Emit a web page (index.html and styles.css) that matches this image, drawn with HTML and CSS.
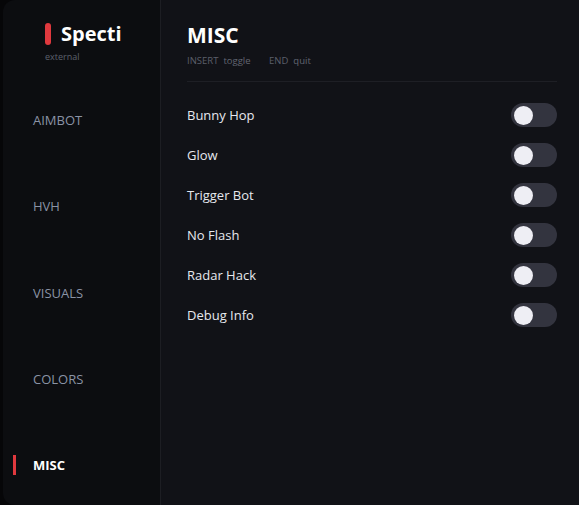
FILE: index.html
```html
<!DOCTYPE html>
<html lang="en">
<head>
  <meta charset="UTF-8">
  <title>Specti</title>
  <meta name="viewport" content="width=device-width, initial-scale=1">
  <link rel="stylesheet" href="styles.css">
</head>
<body>
  <div class="app">

    <!-- Sidebar -->
    <aside class="sidebar">
      <div class="brand">
        <div class="brand-row">
          <span class="brand-mark"></span>
          <span class="brand-name">Specti</span>
        </div>
        <div class="brand-sub">external</div>
      </div>
      <nav class="nav">
        <div class="nav-item">AIMBOT</div>
        <div class="nav-item">HVH</div>
        <div class="nav-item">VISUALS</div>
        <div class="nav-item">COLORS</div>
        <div class="nav-item active">MISC</div>
      </nav>
    </aside>

    <!-- Page -->
    <main class="page">
      <h1>MISC</h1>
      <div class="hints">
        <span class="key">INSERT</span><span class="act">toggle</span>
        <span class="key">END</span><span class="act">quit</span>
      </div>
      <div class="divider"></div>

      <div class="options">
        <div class="option"><span>Bunny Hop</span><span class="switch"><span class="knob"></span></span></div>
        <div class="option"><span>Glow</span><span class="switch"><span class="knob"></span></span></div>
        <div class="option"><span>Trigger Bot</span><span class="switch"><span class="knob"></span></span></div>
        <div class="option"><span>No Flash</span><span class="switch"><span class="knob"></span></span></div>
        <div class="option"><span>Radar Hack</span><span class="switch"><span class="knob"></span></span></div>
        <div class="option"><span>Debug Info</span><span class="switch"><span class="knob"></span></span></div>
      </div>
    </main>

  </div>
</body>
</html>
```

FILE: styles.css
```css
* {
  box-sizing: border-box;
}

html, body {
  margin: 0;
  padding: 0;
  height: 100%;
  background: #060608;
  font-family: 'Open Sans', 'Noto Sans', sans-serif;
  overflow: hidden;
}

.app {
  display: flex;
  height: 100vh;
  margin-left: 3px;
}

/* sidebar */
.sidebar {
  width: 158px;
  flex-shrink: 0;
  display: flex;
  flex-direction: column;
  overflow: hidden;
  background: #0c0d10;
  border-right: 1px solid #1d1e23;
  border-radius: 12px 0 0 12px;
}

.brand {
  flex-shrink: 0;
  height: 77px;
  padding: 23px 0 0 42px;
}

.brand-row {
  display: flex;
  align-items: center;
  gap: 10px;
}

.brand-mark {
  width: 6px;
  height: 22px;
  border-radius: 3px;
  background: #e0393e;
}

.brand-name {
  color: #fff;
  font-size: 20px;
  font-weight: 700;
  line-height: 22px;
}

.brand-sub {
  margin-top: 5px;
  color: #5d616c;
  font-size: 9px;
}

.nav {
  flex-shrink: 0;
}

.nav-item {
  position: relative;
  height: 86.3px;
  display: flex;
  align-items: center;
  padding-left: 30px;
  color: #8a93a5;
  font-size: 13px;
}

.nav-item.active {
  color: #fff;
  font-weight: 700;
}

.nav-item.active::before {
  content: "";
  position: absolute;
  left: 10px;
  top: 50%;
  width: 3px;
  height: 20px;
  margin-top: -10px;
  background: #e0393e;
}

/* page */
.page {
  flex: 1;
  background: #111217;
  padding: 22px 22px 0 26px;
}

.page h1 {
  margin: 0;
  color: #fff;
  font-size: 21px;
  font-weight: 700;
  line-height: 26px;
}

.hints {
  margin-top: 6px;
  font-size: 9.5px;
  line-height: 14px;
  color: #5b5f6a;
}

.hints .act {
  margin-left: 5px;
  margin-right: 16px;
  color: #626672;
}

.divider {
  height: 1px;
  margin-top: 13px;
  background: #1e1f25;
}

.options {
  padding-top: 13px;
}

.option {
  height: 40px;
  display: flex;
  align-items: center;
  justify-content: space-between;
  color: #e6e8ee;
  font-size: 13px;
}

.switch {
  width: 46px;
  height: 24px;
  border-radius: 12px;
  background: #33343f;
  padding: 2px 3px;
  display: flex;
  align-items: center;
}

.knob {
  width: 19px;
  height: 19px;
  border-radius: 50%;
  background: #eeeef4;
}
```
